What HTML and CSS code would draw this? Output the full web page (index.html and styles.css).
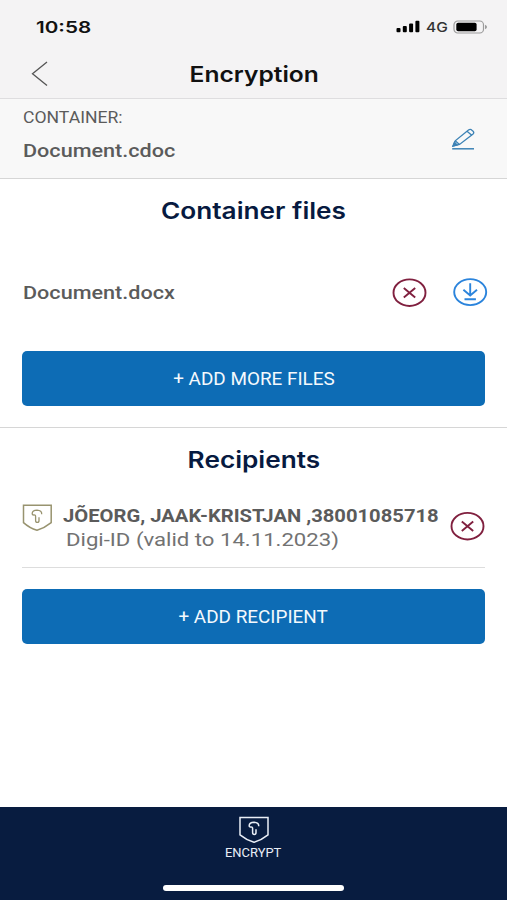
FILE: index.html
```html
<!DOCTYPE html>
<html lang="en">
<head>
<meta charset="utf-8">
<title>Encryption</title>
<link rel="stylesheet" href="styles.css">
</head>
<body>
<div class="screen">
  <header class="top">
    <div class="status">
      <span class="wide time">10:58</span>
      <span class="indicators">
        <svg width="24" height="13" viewBox="0 0 24 13"><rect x=".5" y="8" width="4" height="4.3" rx="1"/><rect x="6.8" y="6" width="4" height="6.3" rx="1"/><rect x="13.1" y="3.5" width="4" height="8.8" rx="1"/><rect x="19.4" y=".7" width="4" height="11.6" rx="1"/></svg>
        <span class="wide network">4G</span>
        <svg class="battery" width="35" height="14" viewBox="0 0 35 14"><rect x="1" y="1" width="29.5" height="12" rx="3.8" fill="none" stroke="#9b9b9b" stroke-width="1.2"/><rect x="3.3" y="2.8" width="20.3" height="8.4" rx="1.8"/><path d="M32 4.8q2 .7 2 2.2t-2 2.2z" fill="#9b9b9b"/></svg>
      </span>
    </div>
    <div class="nav">
      <svg class="back" width="18" height="26" viewBox="0 0 18 26"><path d="M16 1 1.5 12.8 16 24.6" fill="none" stroke="#555" stroke-width="1.3"/></svg>
      <h1 class="wide title">Encryption</h1>
    </div>
  </header>
  <section class="container">
    <div class="names">
      <span class="wide label">CONTAINER:</span>
      <span class="wide file cdoc">Document.cdoc</span>
    </div>
    <svg class="edit" width="24" height="23" viewBox="0 0 24 23" fill="none" stroke="#3c82b5" stroke-width="1.3"><path d="M1.2 20.8H23" stroke-width="1.5"/><path d="m2 18 2.200-5.200L17.500 2q1.300-1 2.800-.3l1.800 1.500q1.300 1.300 0 2.700L8.500 16.500z"/><path d="m16 3.200 4.800 4M4.200 12.800 8.500 16.500"/><path d="m2 18 1.500-3.700L6 17z" fill="#3c82b5"/></svg>
  </section>
  <section class="files">
    <h2 class="wide files-title">Container files</h2>
    <div class="row">
      <span class="wide file docx">Document.docx</span>
      <span class="actions">
        <svg width="36" height="30" viewBox="0 0 36 30" fill="none" stroke="#80203f" stroke-width="1.9"><ellipse cx="18.500" cy="14.700" rx="16" ry="13.300"/><path d="m12.800 10 11.400 9.400m0-9.400L12.800 19.400"/></svg>
        <svg width="36" height="30" viewBox="0 0 36 30" fill="none" stroke="#2b84dc" stroke-width="1.9"><ellipse cx="18.200" cy="14.100" rx="16" ry="13"/><path d="M18.200 5.300v12M11.400 11.800l6.800 5.700 6.800-5.700M12.500 21.200h11.400"/></svg>
      </span>
    </div>
    <button class="button"><span class="wide more">+ ADD MORE FILES</span></button>
  </section>
  <section class="recipients">
    <h2 class="wide recipients-title">Recipients</h2>
    <div class="recipient">
      <svg class="shield" width="30" height="28" viewBox="0 0 30 28" fill="none" stroke="#98936f" stroke-width="1.5"><path d="M1.500 1.300h27.700v17.300Q22.500 24 15 26.300 7.500 24 1.500 18.600z"/><path d="M19.700 10.300q.3-3.900-4.700-4.100-4.600.2-4.800 3.200 0 2 1.700 1.500 1.700-.2 1.700 1.700v3.800q0 2 1.700 2t1.700-2v-3.200" stroke-width="1.300"/></svg>
      <div class="person">
        <span class="wide name">JÕEORG, JAAK-KRISTJAN ,38001085718</span>
        <span class="wide detail">Digi-ID (valid to 14.11.2023)</span>
      </div>
      <svg class="remove" width="36" height="30" viewBox="0 0 36 30" fill="none" stroke="#80203f" stroke-width="1.9"><ellipse cx="18.500" cy="15.200" rx="16" ry="13.300"/><path d="m12.800 10.500 11.400 9.400m0-9.400L12.800 19.900"/></svg>
    </div>
    <button class="button"><span class="wide add">+ ADD RECIPIENT</span></button>
  </section>
  <footer class="bottom">
    <svg width="30" height="28" viewBox="0 0 30 28" fill="none" stroke="#e9eef6" stroke-width="1.5"><path d="M1 1.500h28v17.300Q22.500 24 15 26.300 7.500 24 1 18.800z"/><path d="M19.700 10.300q.3-3.900-4.700-4.100-4.600.2-4.800 3.200 0 2 1.700 1.500 1.700-.2 1.700 1.700v3.800q0 2 1.700 2t1.700-2v-3.200" stroke-width="1.500"/></svg>
    <span class="wide encrypt">ENCRYPT</span>
    <div class="home"></div>
  </footer>
</div>
</body>
</html>
```
FILE: styles.css
```css
* { box-sizing: border-box; }
body { margin: 0; background: #fff; font-family: Roboto, sans-serif; color: #5b5b5b; }
svg { display: block; flex: none; }
h1, h2 { margin: 0; }
.screen { height: 900px; display: flex; flex-direction: column; overflow: hidden; }
/* Labels are set wider than the font's natural width. */
.wide { display: block; width: max-content; white-space: nowrap; transform: scaleX(var(--stretch, 1.2)); transform-origin: left center; }
.top { height: 99px; background: #f4f3f4; border-bottom: 1px solid #dedddf; font-family: Inter, sans-serif; color: #111; }
.status { height: 52px; padding: 1px 19px 0 36px; display: flex; align-items: center; justify-content: space-between; }
.time { font-size: 16px; font-weight: 600; --stretch: 1.29; }
.indicators { display: flex; align-items: center; }
.network { width: 27px; margin-left: 6px; font-size: 13.5px; font-weight: 500; color: #333; --stretch: 1.15; }
.nav { height: 44px; display: grid; grid-template-columns: 60px 1fr 60px; align-items: center; }
.back { margin-left: 31px; }
.title { justify-self: center; transform-origin: center; margin: 1px 0 0 1px; font-size: 21px; line-height: 28px; font-weight: 600; --stretch: 1.17; }
.container { height: 80px; padding: 0 32px 0 22.5px; display: flex; align-items: center; justify-content: space-between; background: #f8f8f8; border-bottom: 1px solid #d6d6d6; }
.names { display: grid; gap: 12px; padding-bottom: 7px; }
.edit { margin-top: 1px; }
.label { font-size: 16px; line-height: 20px; --stretch: 1.1; }
.file { font-size: 18px; line-height: 22px; font-weight: 500; --stretch: 1.2; }
.files { height: 249px; padding: 16px 22px 0; border-bottom: 1px solid #d6d6d6; }
h2 { font-family: Inter, sans-serif; font-size: 22.5px; line-height: 32px; font-weight: 600; color: #071a40; --stretch: 1.165; }
h2.wide { margin: 0 auto; transform-origin: center; }
.row { height: 126px; padding: 6px 0 0 .5px; margin-bottom: -2px; display: flex; align-items: center; justify-content: space-between; }
.actions { display: flex; gap: 25px; margin: -1px -3px 0 0; }
.button { display: flex; align-items: center; justify-content: center; width: 100%; height: 55px; border: 0; border-radius: 5px; background: #0d6cb5; color: #f4f9fd; font: 400 18px/24px Roboto, sans-serif; }
.button .wide { transform-origin: center; --stretch: 1.05; }
.recipients { padding: 16px 22px 0; flex: 1; }
.recipient { height: 92px; margin-bottom: 21px; padding-top: 28px; display: flex; align-items: flex-start; border-bottom: 1px solid #ddd; }
.person { width: 387px; flex: none; padding-left: 11px; }
.name { font-size: 18px; line-height: 24px; font-weight: 700; --stretch: 1.122; }
.detail { margin-left: 2.5px; font-size: 18px; line-height: 23px; color: #727272; --stretch: 1.23; }
.remove { margin: 7px 0 0 10px; }
.bottom { height: 93px; padding-top: 9px; display: flex; flex-direction: column; align-items: center; background: #081c40; color: #e9eef6; }
.encrypt { margin-top: 1px; transform-origin: center; font-size: 12px; line-height: 16px; --stretch: 1.08; }
.home { width: 181px; height: 6px; margin-top: 24px; border-radius: 3px; background: #fff; }
```
